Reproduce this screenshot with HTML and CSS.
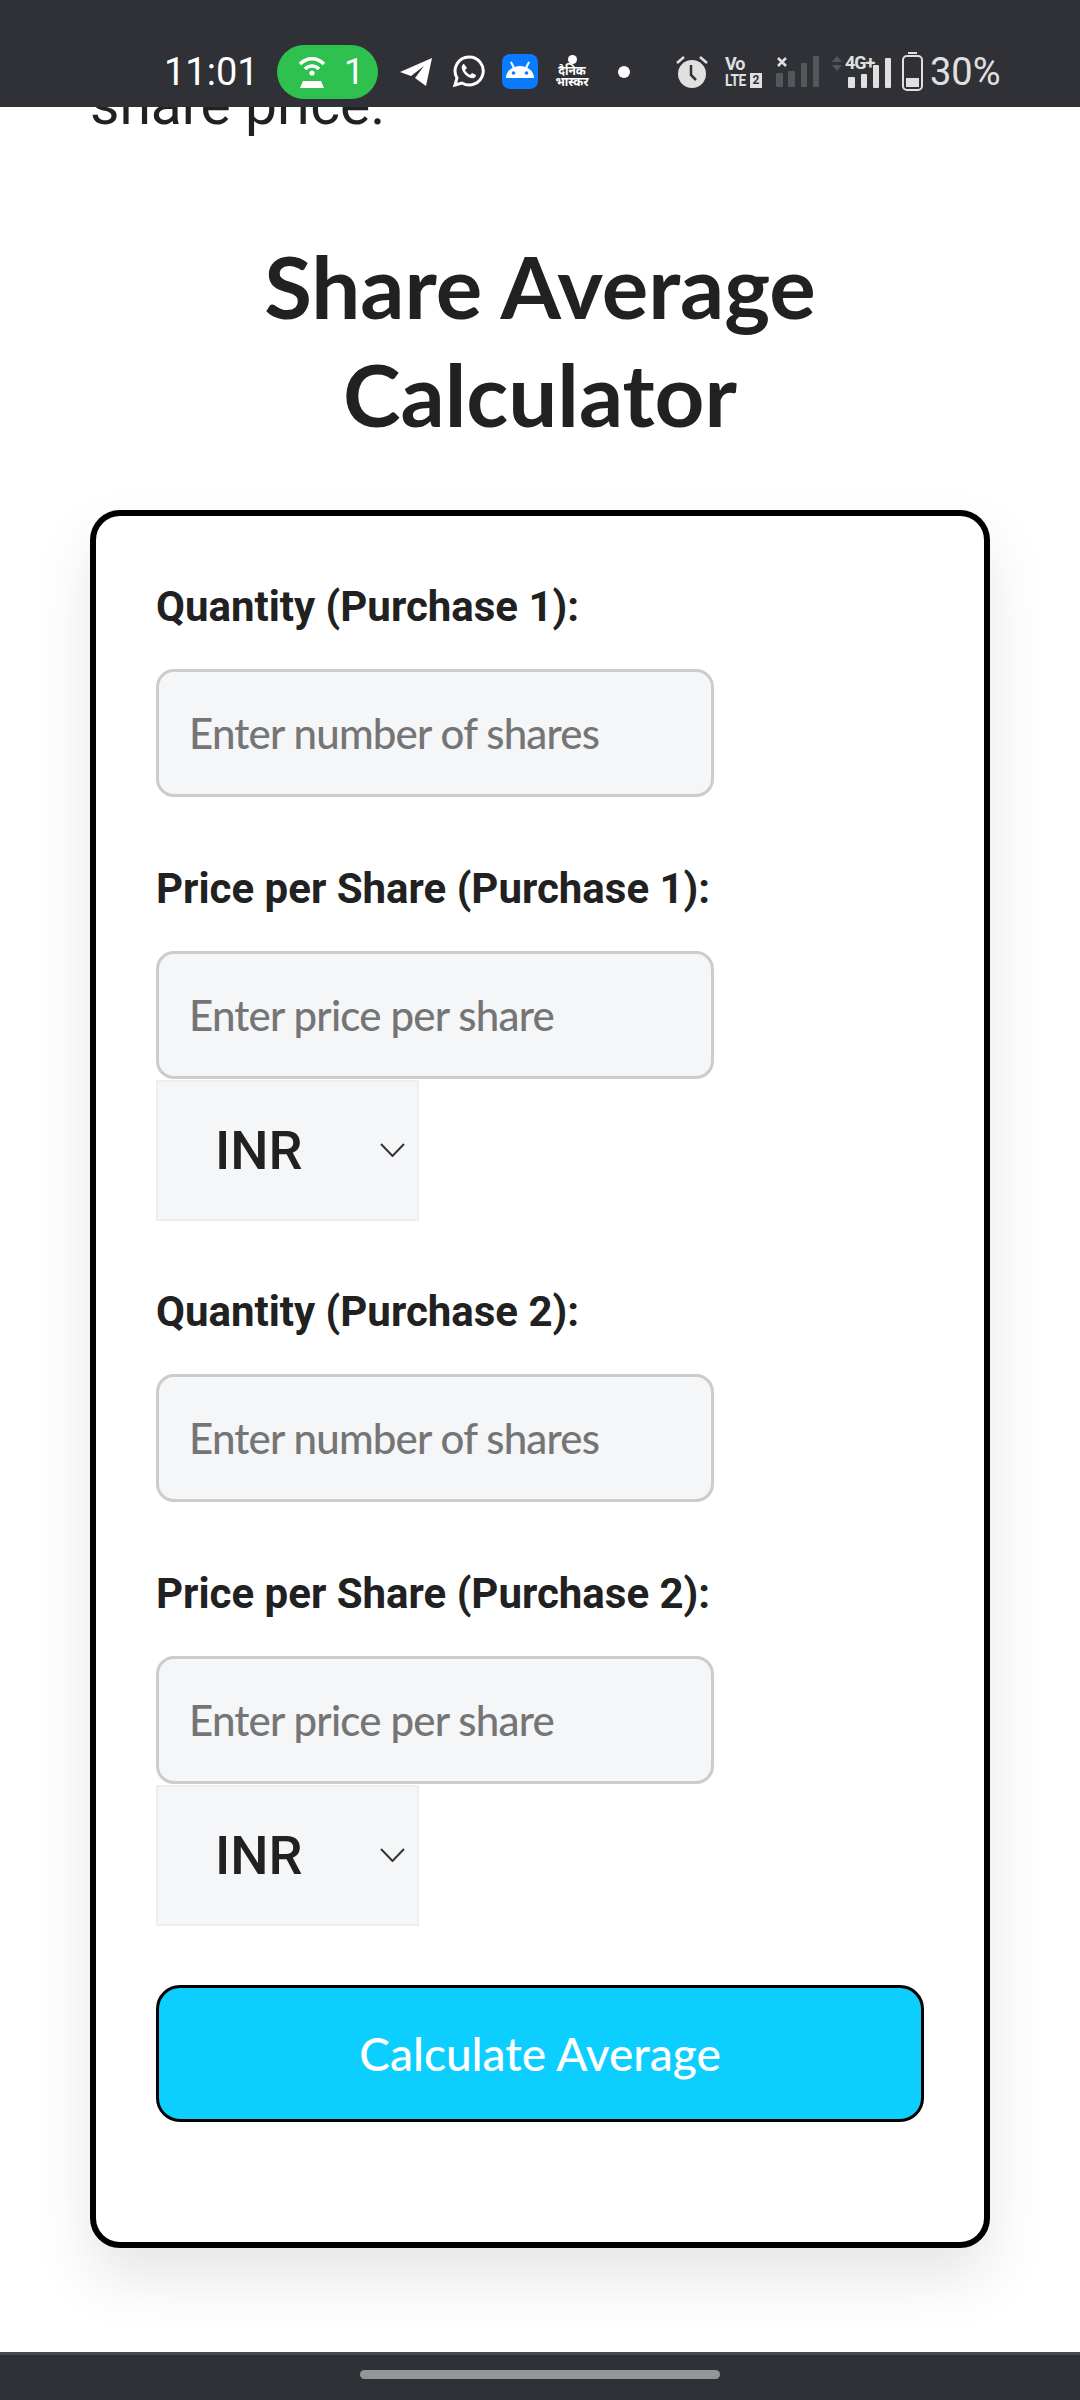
FILE: index.html
```html
<!DOCTYPE html>
<html lang="en">
<head>
<meta charset="utf-8">
<title>Share Average Calculator</title>
<link rel="stylesheet" href="styles.css">
</head>
<body>
<header class="status">
  <span class="time">11:01</span>
  <span class="pill">
    <svg class="pill-icon" width="32" height="32" viewBox="0 0 32 32"><path d="M4 8C11 1 21 1 28 8" class="arc"/><path d="M9 13c4-4 10-4 14 0" class="arc"/><circle cx="16" cy="17" r="2.6" fill="#fff"/><path d="M7 25h18l3 7H4z" fill="#fff"/></svg>
    <span class="pill-num">1</span>
  </span>
  <svg class="ic tg" width="32" height="28" viewBox="0 0 32 28"><path d="M0 14 32 0 26 28 15 20 24 8 11 18Z" fill="#fff"/></svg>
  <svg class="ic wa" width="33" height="33" viewBox="0 0 33 33"><path d="M17 2a14 14 0 1 1-7 26l-7 2 2-7A14 14 0 0 1 17 2z" fill="none" stroke="#fff" stroke-width="3"/><path d="M12 9c-1 0-3 2-2 5 1 4 5 8 9 9 3 1 5-1 5-3l-4-2-2 2c-2-1-4-3-5-5l2-2z" fill="#fff"/></svg>
  <svg class="ic an" width="36" height="35" viewBox="0 0 36 35"><rect width="36" height="35" rx="8" fill="#0a7aff"/><path d="M4 24a14 12 0 0 1 28 0z" fill="#fff"/><path d="M9 8l3 6M27 8l-3 6" stroke="#fff" stroke-width="2"/><circle cx="11.500" cy="19" r="1.8" fill="#0a7aff"/><circle cx="24.500" cy="19" r="1.8" fill="#0a7aff"/></svg>
  <span class="db"><span class="db-dot"></span><span class="db-line">दैनिक</span><span class="db-line">भास्कर</span></span>
  <span class="dot"></span>
  <svg class="ic al" width="32" height="33" viewBox="0 0 32 33"><path d="M1 8 8 2M31 8 24 2" stroke="#e0e0e0" stroke-width="2.5"/><circle cx="16" cy="19" r="14" fill="#e0e0e0"/><path d="M15 10v10l5 5" fill="none" stroke="#303136" stroke-width="2.5"/></svg>
  <span class="vo"><span class="vo-top">Vo</span><span class="vo-low">LTE</span><span class="vo-sim">2</span></span>
  <svg class="ic s1" width="44" height="31" viewBox="0 0 44 31"><g fill="#55565a"><rect y="17" width="7" height="14" rx="1"/><rect x="12" y="15" width="7" height="16" rx="1"/><rect x="25" y="7" width="6" height="24" rx="1"/><rect x="37" width="6" height="31" rx="1"/></g><path d="M2 2l8 8M10 2l-8 8" stroke="#e0e0e0" stroke-width="2.500"/></svg>
  <span class="s2">
    <svg class="ic" width="60" height="32" viewBox="0 0 60 32"><path d="M0 6 5 0l5 6zM0 9l5 6 5-6z" fill="#55565a"/><g fill="#e0e0e0"><rect x="16" y="21" width="7" height="11" rx="1"/><rect x="29" y="18" width="6" height="14" rx="1"/><rect x="41" y="9" width="6" height="23" rx="1"/><rect x="53" y="2" width="6" height="30" rx="1"/></g></svg>
    <span class="g4">4G+</span>
  </span>
  <svg class="ic ba" width="21" height="39" viewBox="0 0 21 39"><rect x="6" width="9" height="2" fill="#e0e0e0"/><rect x="1" y="4" width="19" height="34" rx="4" fill="none" stroke="#e0e0e0" stroke-width="2"/><rect x="4" y="26" width="13" height="9" fill="#e0e0e0"/></svg>
  <span class="pct">30%</span>
</header>

<main class="page">
  <p class="intro">share price.</p>
  <h1 class="title">Share Average<br>Calculator</h1>
  <form class="card">
    <label class="label" for="q1">Quantity (Purchase 1):</label>
    <input class="field spaced" id="q1" type="text" placeholder="Enter number of shares">
    <label class="label" for="p1">Price per Share (Purchase 1):</label>
    <input class="field" id="p1" type="text" placeholder="Enter price per share">
    <div class="select-wrap spaced">
      <select class="select"><option>INR</option></select>
      <svg class="chev" width="25" height="14" viewBox="0 0 25 14"><path d="M1 1l11.500 12L24 1" fill="none" stroke="#333" stroke-width="2"/></svg>
    </div>
    <label class="label" for="q2">Quantity (Purchase 2):</label>
    <input class="field spaced" id="q2" type="text" placeholder="Enter number of shares">
    <label class="label" for="p2">Price per Share (Purchase 2):</label>
    <input class="field" id="p2" type="text" placeholder="Enter price per share">
    <div class="select-wrap spaced">
      <select class="select"><option>INR</option></select>
      <svg class="chev" width="25" height="14" viewBox="0 0 25 14"><path d="M1 1l11.500 12L24 1" fill="none" stroke="#333" stroke-width="2"/></svg>
    </div>
    <button class="submit" type="button">Calculate Average</button>
  </form>
</main>

<footer class="nav"><span class="handle"></span></footer>
</body>
</html>
```
FILE: styles.css
```css
* { box-sizing: border-box; }
html, body { margin: 0; padding: 0; }
body {
  width: 1080px;
  height: 2400px;
  display: flex;
  flex-direction: column;
  overflow: hidden;
  background: #fff;
  color: #212121;
  font-family: Roboto, sans-serif;
}

/* status bar */
.status {
  flex: 0 0 107px;
  height: 107px;
  background: #303136;
  display: flex;
  align-items: center;
  padding: 36px 0 0 164px;
  color: #fff;
  position: relative;
  z-index: 2;
}
.time { font-size: 38px; width: 92px; line-height: 44px; white-space: nowrap; }
.pill {
  margin-left: 21px;
  width: 101px;
  height: 54px;
  border-radius: 27px;
  background: #2fc14f;
  display: flex;
  align-items: center;
  padding-left: 19px;
}
.arc { fill: none; stroke: #fff; stroke-width: 3.5; }
.pill-num { font-size: 36px; margin-left: 16px; line-height: 40px; }
.ic { display: block; flex: none; }
.tg { margin-left: 22px; }
.wa { margin-left: 20px; }
.an { margin-left: 17px; }
.db {
  margin-left: 18px;
  width: 32px;
  height: 34px;
  flex: none;
  display: flex;
  flex-direction: column;
  align-items: center;
  font-family: "Noto Sans Devanagari", "Noto Sans", sans-serif;
  font-weight: 700;
  font-size: 12px;
  line-height: 11px;
  color: #fff;
  white-space: nowrap;
}
.db-dot { width: 9px; height: 9px; border-radius: 50%; background: #fff; margin-bottom: 3px; flex: none; }
.db-line { display: block; height: 11px; }
.dot { width: 12px; height: 12px; border-radius: 50%; background: #fff; margin-left: 30px; }
.al { margin-left: 46px; }
.vo { position: relative; display: block; flex: none; width: 37px; height: 32px; margin-left: 17px; color: #e0e0e0; font-weight: 700; }
.vo-top { position: absolute; left: 0; top: 0; font-size: 18px; line-height: 16px; letter-spacing: -1px; }
.vo-low {
  position: absolute;
  left: 0;
  top: 17px;
  font-size: 16px;
  line-height: 15px;
  letter-spacing: -0.5px;
  transform: scaleX(.85);
  transform-origin: left center;
}
.vo-sim {
  position: absolute;
  right: 0;
  top: 17px;
  width: 12px;
  height: 15px;
  background: #e0e0e0;
  color: #303136;
  font-size: 12px;
  line-height: 15px;
  text-align: center;
}
.s1 { margin-left: 14px; }
.s2 { margin-left: 12px; position: relative; display: block; flex: none; width: 60px; height: 32px; }
.g4 {
  position: absolute;
  left: 13px;
  top: -2px;
  font-size: 18px;
  line-height: 18px;
  font-weight: 700;
  color: #e0e0e0;
  letter-spacing: -1px;
  white-space: nowrap;
}
.ba { margin-left: 10px; }
.pct { font-size: 38px; color: #e0e0e0; margin-left: 7px; line-height: 44px; white-space: nowrap; }

/* page */
.page {
  flex: 1 1 auto;
  min-height: 0;
  overflow: hidden;
  padding: 0 90px;
}
.intro {
  margin: -35px 0 0 0;
  font-size: 57px;
  line-height: 66px;
  color: #212121;
  white-space: nowrap;
}
.title {
  margin: 94px 0 62px;
  font-family: Lato, sans-serif;
  font-weight: 700;
  font-size: 87px;
  line-height: 108px;
  text-align: center;
  color: #212121;
}
.card {
  display: block;
  width: 900px;
  border: 6px solid #000;
  border-radius: 30px;
  background: #fff;
  padding: 59px 60px 120px;
  box-shadow: 0 30px 60px rgba(0, 0, 0, .1);
}
.label {
  display: block;
  font-weight: 700;
  font-size: 42px;
  line-height: 63px;
  margin-bottom: 31px;
  color: #212121;
}
.field {
  display: block;
  width: 558px;
  height: 128px;
  border: 3px solid #ccc;
  border-radius: 18px;
  background: #f5f6f8;
  padding: 0 30px;
  font-family: Lato, sans-serif;
  font-weight: 500;
  font-size: 42px;
  letter-spacing: -0.8px;
  color: #212121;
  outline: none;
}
.field::placeholder { color: #757575; opacity: 1; }
.spaced { margin-bottom: 60px; }
.select-wrap { position: relative; width: 263px; height: 141px; margin-top: 1px; margin-bottom: 59px; }
.select {
  display: block;
  width: 100%;
  height: 100%;
  appearance: none;
  -webkit-appearance: none;
  border: 2px solid #eeeeee;
  border-radius: 0;
  background: #f5f6f8;
  padding: 0 0 0 57px;
  font-family: Roboto, sans-serif;
  font-weight: 500;
  font-size: 54px;
  color: #212121;
}
.chev { position: absolute; left: 224px; top: 63px; }
.submit {
  display: block;
  width: 768px;
  height: 137px;
  margin-top: 1px;
  border: 3px solid #000;
  border-radius: 24px;
  background: #0dcfff;
  color: #fff;
  font-family: Lato, sans-serif;
  font-weight: 500;
  font-size: 46px;
  cursor: pointer;
}

/* nav bar */
.nav {
  flex: 0 0 48px;
  height: 48px;
  background: #303136;
  border-top: 3px solid #454a50;
  display: flex;
  justify-content: center;
  padding-top: 15px;
}
.handle { width: 360px; height: 9px; border-radius: 5px; background: #939598; }
```
